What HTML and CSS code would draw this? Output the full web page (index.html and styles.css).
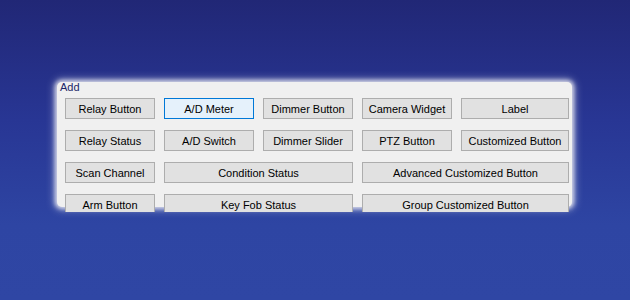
FILE: index.html
```html
<!DOCTYPE html>
<html lang="en">
<head>
<meta charset="UTF-8" />
<title>Add</title>
<link rel="stylesheet" href="styles.css">
</head>
<body>
  <div class="panel">
    <div class="caption">Add</div>
    <div class="grid">
      <button>Relay Button</button>
      <button class="focused">A/D Meter</button>
      <button>Dimmer Button</button>
      <button>Camera Widget</button>
      <button>Label</button>

      <button>Relay Status</button>
      <button>A/D Switch</button>
      <button>Dimmer Slider</button>
      <button>PTZ Button</button>
      <button>Customized Button</button>

      <button>Scan Channel</button>
      <button class="wide">Condition Status</button>
      <button class="wide">Advanced Customized Button</button>

      <button>Arm Button</button>
      <button class="wide">Key Fob Status</button>
      <button class="wide">Group Customized Button</button>
    </div>
  </div>
</body>
</html>
```

FILE: styles.css
```css
html, body {
  margin: 0;
  height: 300px;
}

body {
  background: linear-gradient(180deg, #212776 0%, #283694 40%, #2e45a3 75%, #2f46a4 100%);
  font-family: 'Liberation Sans', Arial, sans-serif;
  overflow: hidden;
}

/* group box */
.panel {
  margin: 87px 0 0 57px;
  width: 515px;
  height: 125px;
  background: #f0f0f0;
  border-radius: 5px;
  box-shadow: 0 0 4px 2px rgba(240,240,245,0.8), 0 0 9px 3px rgba(220,224,240,0.45);
  padding: 0 0 0 8px;
  box-sizing: border-box;
}

.caption {
  font-size: 11px;
  color: #1c2668;
  line-height: 10px;
  height: 16px;
  margin: -5px 0 0 -5px;
}

.grid {
  display: grid;
  grid-template-columns: 90px 90px 90px 90px 108px;
  grid-auto-rows: 21px;
  column-gap: 9px;
  row-gap: 11px;
  height: 114px;
  overflow: hidden;
}

.grid button {
  font-family: 'Liberation Sans', Arial, sans-serif;
  font-size: 11px;
  color: #000;
  background: #e1e1e1;
  border: 1px solid #adadad;
  padding: 0;
  margin: 0;
  height: 21px;
  white-space: nowrap;
}

.grid .wide {
  grid-column: span 2;
}

.grid .focused {
  background: #e5f1fb;
  border-color: #0078d7;
}
```
